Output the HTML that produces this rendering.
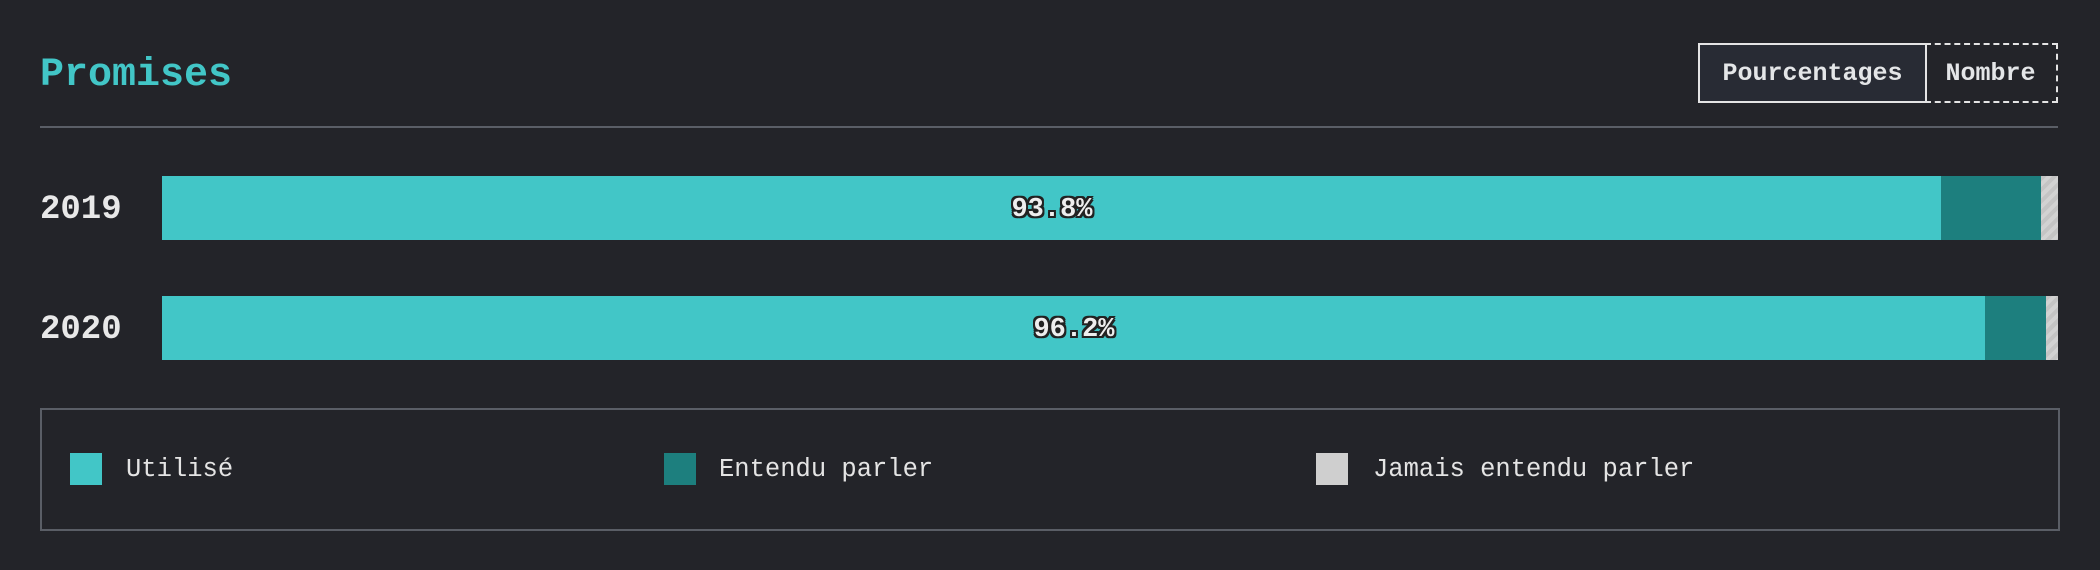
<!DOCTYPE html>
<html><head><meta charset="utf-8"><style>
html,body{margin:0;padding:0;background:#232429;width:2100px;height:570px;overflow:hidden;font-family:"Liberation Mono",monospace;color:#e8e8e8}
.a{position:absolute}
.title{left:40px;top:50px;font-size:40px;font-weight:bold;color:#42c6c7;line-height:52px}
.btn{top:43px;height:56px;line-height:58px;font-size:25px;font-weight:bold;text-align:center;color:#e4e6e8}
.b1{left:1698px;width:225px;border:2px solid #e4e4e4;background:#282b34}
.b2{left:1925px;width:131px;border:2px dashed #e4e4e4;border-left:none}
.div{left:40px;top:126px;width:2018px;height:2px;background:#5a5e66}
.yr{left:40px;font-size:34px;font-weight:bold;line-height:40px}
.bar{left:162px;width:1896px;height:64px;display:flex}
.bar div{height:100%}
.t{background:#42c6c7}.d{background:#1d7f7e}
.g{background:repeating-linear-gradient(135deg,#c4c4c4 0 4px,#d2d2d2 4px 8px);flex:1}
.pct{font-size:27px;font-weight:bold;color:#eee;line-height:68px;text-align:center;text-shadow:-2px -2px 0 #222,2px -2px 0 #222,-2px 2px 0 #222,2px 2px 0 #222,0 2px 0 #222,0 -2px 0 #222,2px 0 0 #222,-2px 0 0 #222}
.leg{left:40px;top:408px;width:2016px;height:119px;border:2px solid #5a5e66}
.sw{top:453px;width:32px;height:32px}
.lt{top:450px;font-size:25.5px;line-height:40px;color:#e4e4e4}
</style></head><body>
<div class="a title">Promises</div>
<div class="a btn b1">Pourcentages</div>
<div class="a btn b2">Nombre</div>
<div class="a div"></div>

<div class="a yr" style="top:190px">2019</div>
<div class="a bar" style="top:176px"><div class="t" style="width:1779px"></div><div class="d" style="width:100px"></div><div class="g"></div></div>
<div class="a pct" style="left:962px;width:180px;top:176px">93.8%</div>

<div class="a yr" style="top:310px">2020</div>
<div class="a bar" style="top:296px"><div class="t" style="width:1823px"></div><div class="d" style="width:61px"></div><div class="g"></div></div>
<div class="a pct" style="width:180px;top:296px;left:984px">96.2%</div>

<div class="a leg"></div>
<div class="a sw" style="left:70px;background:#42c6c7"></div>
<div class="a lt" style="left:126px">Utilisé</div>
<div class="a sw" style="left:664px;background:#1d7f7e"></div>
<div class="a lt" style="left:719px">Entendu parler</div>
<div class="a sw" style="left:1316px;background:#cfcfcf"></div>
<div class="a lt" style="left:1373px">Jamais entendu parler</div>
</body></html>
